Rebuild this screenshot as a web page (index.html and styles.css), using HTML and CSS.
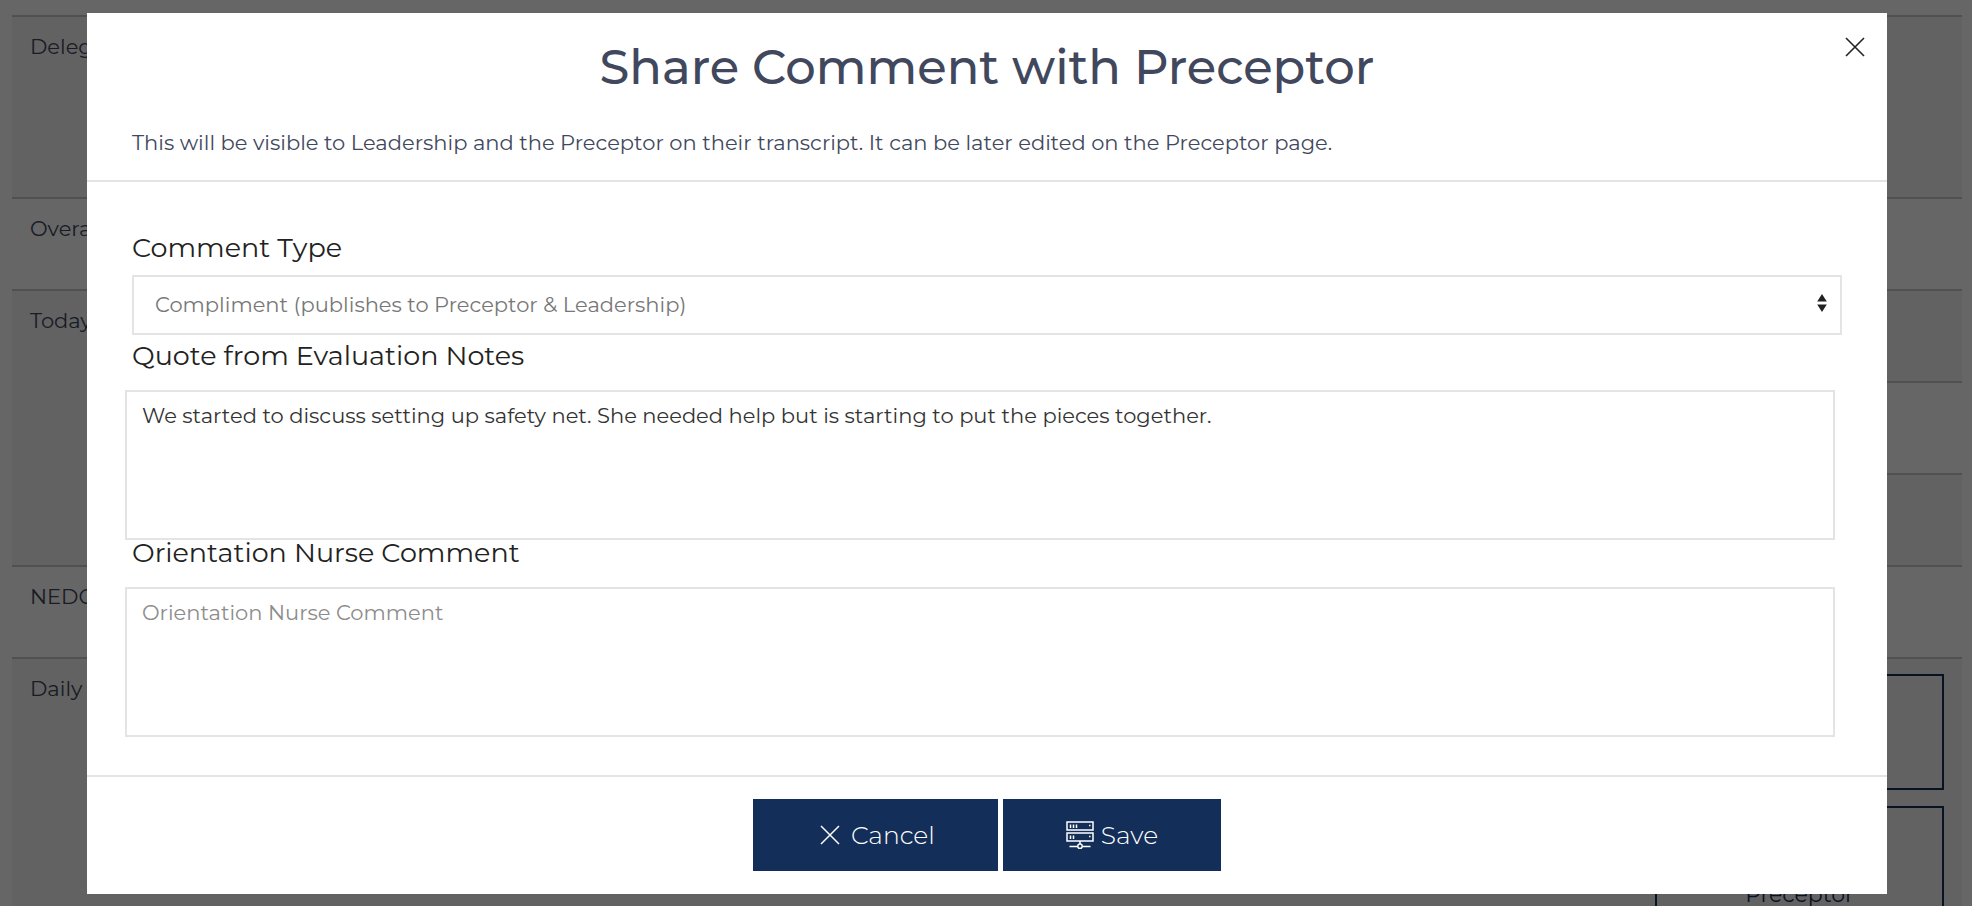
FILE: index.html
```
<!DOCTYPE html>
<html lang="en">
<head>
    <meta charset="UTF-8">
    <meta name="viewport" content="width=device-width, initial-scale=1.0">
    <title>Share Comment with Preceptor</title>
    <link rel="stylesheet" href="styles.css">
</head>
<body>

<main class="page">
    <table class="evaluation">
        <tbody>
            <tr class="tall striped">
                <th scope="row">Delegation</th>
                <td></td>
            </tr>
            <tr>
                <th scope="row">Overall</th>
                <td></td>
            </tr>
            <tr class="striped">
                <th scope="row" rowspan="3">Today's</th>
                <td></td>
            </tr>
            <tr>
                <td></td>
            </tr>
            <tr class="striped">
                <td></td>
            </tr>
            <tr>
                <th scope="row">NEDOC</th>
                <td></td>
            </tr>
            <tr class="striped">
                <th scope="row">Daily</th>
                <td>
                    <div class="row-actions">
                        <button type="button" class="outline-button" aria-label="Edit"></button>
                        <button type="button" class="outline-button">Share with Preceptor</button>
                    </div>
                </td>
            </tr>
        </tbody>
    </table>
</main>

<div class="overlay">
    <form class="modal" role="dialog" aria-modal="true" aria-labelledby="modal-title">
        <header class="modal-header">
            <h1 id="modal-title">Share Comment with Preceptor</h1>
            <p>This will be visible to Leadership and the Preceptor on their transcript. It can be later edited on the Preceptor page.</p>
            <button type="button" class="close" aria-label="Close">
                <svg width="20" height="20" viewBox="0 0 20 20" fill="none" stroke="currentColor" stroke-width="1.6">
                    <path d="M1 1l18 18M19 1L1 19"/>
                </svg>
            </button>
        </header>

        <div class="modal-body">
            <label for="comment-type">Comment Type</label>
            <div class="select">
                <select id="comment-type">
                    <option>Compliment (publishes to Preceptor &amp; Leadership)</option>
                </select>
                <svg class="arrows" width="10" height="18" viewBox="0 0 10 18" fill="currentColor">
                    <path d="M5 0l4.800 7.500H.2zM5 18L.2 10.500h9.600z"/>
                </svg>
            </div>

            <label for="quote">Quote from Evaluation Notes</label>
            <textarea id="quote">We started to discuss setting up safety net. She needed help but is starting to put the pieces together.</textarea>

            <label for="comment">Orientation Nurse Comment</label>
            <textarea id="comment" placeholder="Orientation Nurse Comment"></textarea>
        </div>

        <footer class="modal-footer">
            <button type="button" class="button cancel">
                <svg width="20" height="20" viewBox="0 0 20 20" fill="none" stroke="currentColor" stroke-width="1.5">
                    <path d="M1 1l18 18M19 1L1 19"/>
                </svg>
                Cancel
            </button>
            <button type="submit" class="button save">
                <svg width="28" height="28" viewBox="0 0 28 28" fill="none" stroke="currentColor" stroke-width="1.5">
                    <path d="M1 1h26v8H1zM1 12h26v8H1zM14 20v3M3.500 25.500h8M16.500 25.500h8"/>
                    <path d="M4.500 3.500v3.500M7.500 3.500v3.500M10.500 3.500v3.500M4.500 14.500V18M7.500 14.500V18M23 4.500h1.500M23 15.500h1.500"/>
                    <circle cx="14" cy="25.300" r="2.200"/>
                </svg>
                Save
            </button>
        </footer>
    </form>
</div>

</body>
</html>
```
FILE: styles.css
```
* {
    box-sizing: border-box;
}

body {
    margin: 0;
    height: 100vh;
    overflow: hidden;
    background-color: #fff;
    color: #41485d;
    font-family: Montserrat, Inter, sans-serif;
    font-size: 21px;
    line-height: 30px;
}

button,
select,
textarea {
    font: inherit;
}

/* page behind the modal */

.page {
    padding: 15px 10px 0 12px;
}

.evaluation {
    width: 100%;
    border-collapse: separate;
    border-spacing: 0;
}

.evaluation th,
.evaluation td {
    height: 92px;
    padding: 15px 18px;
    border-top: 2px solid #c8c8c8;
    text-align: left;
    vertical-align: top;
    font-weight: 400;
}

.evaluation .tall th {
    height: 182px;
}

.striped {
    background-color: #f6f6f6;
}

.row-actions {
    display: flex;
    flex-direction: column;
    align-items: flex-end;
    gap: 16px;
}

.outline-button {
    width: 289px;
    height: 116px;
    padding: 36px 60px 8px;
    border: 2px solid #132e58;
    background: none;
    color: #132e58;
    font-size: 22px;
    line-height: 34px;
}

/* modal */

.overlay {
    position: fixed;
    inset: 0;
    padding: 13px 85px 0 87px;
    background-color: rgba(0, 0, 0, 0.6);
}

.modal {
    background-color: #fff;
}

.modal-header {
    position: relative;
    padding: 24px 45px 22px;
    border-bottom: 2px solid #e4e4e4;
}

.modal-header h1 {
    margin: 0 0 31px;
    font-size: 48px;
    font-weight: 500;
    line-height: 60px;
    text-align: center;
}

.modal-header p {
    margin: 0;
}

.close {
    position: absolute;
    top: 24px;
    right: 22px;
    display: flex;
    padding: 0;
    border: none;
    background: none;
    color: #222;
    cursor: pointer;
}

.modal-body {
    padding: 53px 45px 38px;
}

.modal-body label {
    display: block;
    margin-bottom: 21px;
    color: #222;
    font-size: 27px;
    line-height: 26px;
}

.select {
    position: relative;
    margin: -7px 0 8px;
    color: #222;
}

.select select {
    display: block;
    width: 100%;
    height: 60px;
    padding: 0 21px;
    border: 2px solid #e4e4e4;
    background-color: #fff;
    color: #777;
    appearance: none;
}

.arrows {
    position: absolute;
    top: 19px;
    right: 15px;
    pointer-events: none;
}

.modal-body textarea {
    display: block;
    width: 100%;
    height: 150px;
    margin-left: -7px;
    padding: 9px 15px;
    border: 2px solid #e4e4e4;
    color: #333;
    resize: none;
}

.modal-body textarea::placeholder {
    color: #8c8c8c;
}

.modal-footer {
    display: flex;
    justify-content: center;
    gap: 5px;
    padding: 22px 45px 23px;
    border-top: 2px solid #e4e4e4;
}

.button {
    display: flex;
    align-items: center;
    height: 72px;
    padding: 0 63px;
    border: none;
    background-color: #132e58;
    color: #fff;
    font-size: 25px;
    font-weight: 300;
    cursor: pointer;
}

.cancel {
    gap: 11px;
    padding-left: 67px;
}

.save {
    gap: 7px;
}
```
